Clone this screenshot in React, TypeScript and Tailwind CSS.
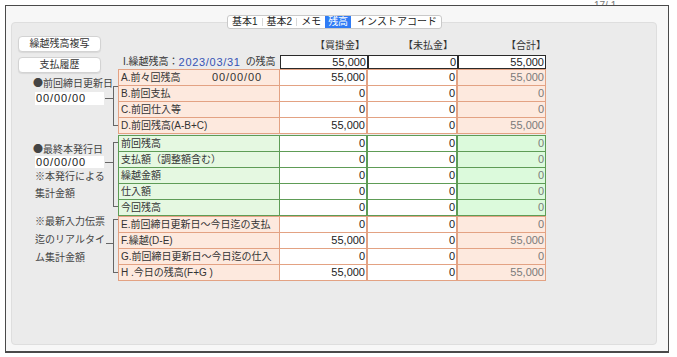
import React from "react";

const font = "font-['Liberation_Sans','Noto_Sans_CJK_JP',sans-serif]";

type Tone = "orange" | "green";

const tones = {
  orange: {
    border: "border-[#e3a283]",
    label: "bg-[#fde9de]",
    total: "bg-[#fde9de]",
  },
  green: {
    border: "border-[#5e9c56]",
    label: "bg-[#e5f8e1]",
    total: "bg-[#dcfadc]",
  },
};

type RowProps = {
  label: React.ReactNode;
  v1: string;
  v2: string;
  v3: string;
  tone: Tone;
};

function Row({ label, v1, v2, v3, tone }: RowProps) {
  const t = tones[tone];
  return (
    <div className={`grid h-[16px] grid-cols-[161px_88px_90px_87px] border-b ${t.border}`}>
      <div className={`flex items-center whitespace-nowrap border-r pl-[2px] text-[10px] leading-none text-[#333] ${t.border} ${t.label}`}>
        {label}
      </div>
      <div className={`flex items-center justify-end border-r-2 bg-white pr-[1px] text-[11px] leading-none text-[#222] ${t.border}`}>
        {v1}
      </div>
      <div className={`flex items-center justify-end border-r-2 bg-white pr-[1px] text-[11px] leading-none text-[#222] ${t.border}`}>
        {v2}
      </div>
      <div className={`flex items-center justify-end pr-[1px] text-[11px] leading-none text-[#7a7a7a] ${t.total}`}>
        {v3}
      </div>
    </div>
  );
}

function Block({ tone, rows }: { tone: Tone; rows: Omit<RowProps, "tone">[] }) {
  return (
    <div className={`border-x border-t ${tones[tone].border}`}>
      {rows.map((r, i) => (
        <Row key={i} tone={tone} {...r} />
      ))}
    </div>
  );
}

// full-width bullet, Liberation's own glyph is too small
const Dot = () => <span className="font-['Noto_Sans_CJK_JP',sans-serif]">●</span>;

export default function App() {
  return (
    <div className={`relative h-[357px] w-[677px] overflow-hidden bg-white pl-[5px] pt-[5px] ${font}`}>
      <span className="absolute left-[594px] top-[1px] text-[10px] leading-none text-[#777]">17/ 1</span>

      <div className="relative h-[348px] w-[664px] border border-b-2 border-[#4a4a4a] bg-[#f7f7f7] pl-[5px] pt-[16px]">
        {/* tabs */}
        <div className="absolute left-[221px] top-[9px] z-10 flex h-[14px] items-stretch rounded-[3px] border border-[#c9c9c9] bg-white text-[10px] leading-none text-[#222]">
          <span className="flex items-center px-[4px]">基本1</span>
          <span className="my-[2px] w-px bg-[#d8d8d8]" />
          <span className="flex items-center px-[4px]">基本2</span>
          <span className="my-[2px] w-px bg-[#d8d8d8]" />
          <span className="flex items-center px-[4px]">メモ</span>
          <span className="flex items-center bg-[#2f7bf5] px-[3px] text-white">残高</span>
          <span className="flex items-center pl-[6px] pr-[4px]">インストアコード</span>
        </div>

        <div className="flex h-[323px] w-[646px] rounded-[4px] border border-[#dedede] bg-[#ebebeb]">
          {/* left side */}
          <div className="flex w-[106px] shrink-0 flex-col pt-[13px] text-[10px] text-[#444]">
            <button className="ml-[6px] h-[16px] w-[83px] rounded-[4px] border border-[#d3d3d3] bg-white text-[10px] leading-none text-[#333] shadow-[0_1px_1px_rgba(0,0,0,0.08)]">
              繰越残高複写
            </button>
            <button className="ml-[6px] mt-[5px] h-[16px] w-[83px] rounded-[4px] border border-[#d3d3d3] bg-white text-[10px] leading-none text-[#333] shadow-[0_1px_1px_rgba(0,0,0,0.08)]">
              支払履歴
            </button>

            <div className="ml-[21px] mt-[4px] flex">
              <div className="w-[80px]">
                <div className="h-[12px] whitespace-nowrap leading-[12px]">
                  <Dot />前回締日更新日
                </div>
                <div className="mt-[3px] flex items-center">
                  <div className="ml-[2px] flex h-[13px] w-[69px] items-center bg-white pl-[1px] text-[11px] leading-none tracking-[0.9px] text-[#222]">
                    00/00/00
                  </div>
                  <div className="ml-[1px] h-px flex-1 bg-[#666]" />
                </div>
              </div>
              <div className="mt-[9px] h-[40px] w-[5px] border-y border-l border-[#666]" />
            </div>

            <div className="ml-[21px] mt-[15px] flex">
              <div className="w-[80px]">
                <div className="mt-[2px] h-[12px] whitespace-nowrap leading-[12px]">
                  <Dot />最終本発行日
                </div>
                <div className="mt-[1px] flex items-center">
                  <div className="ml-[2px] flex h-[12px] w-[69px] items-center bg-white pl-[1px] text-[11px] leading-none tracking-[0.9px] text-[#222]">
                    00/00/00
                  </div>
                  <div className="ml-[1px] h-px flex-1 bg-[#666]" />
                </div>
                <div className="whitespace-nowrap pl-[2px] leading-[17px]">
                  <div>※本発行による</div>
                  <div>集計金額</div>
                </div>
              </div>
              <div className="mt-[1px] h-[65px] w-[5px] border-y border-l border-[#666]" />
            </div>

            <div className="ml-[21px] mt-[6px] flex">
              <div className="w-[80px] whitespace-nowrap pl-[2px] leading-[18px]">
                <div>※最新入力伝票</div>
                <div className="flex items-center">
                  <span>迄のリアルタイ</span>
                  <span className="ml-[1px] mt-[6px] h-px flex-1 bg-[#666]" />
                </div>
                <div>ム集計金額</div>
              </div>
              <div className="mt-[6px] h-[54px] w-[5px] border-y border-l border-[#666]" />
            </div>
          </div>

          {/* table */}
          <div className="flex flex-col pt-[16px]">
            <div className="grid h-[14px] grid-cols-[162px_88px_90px_88px] text-[10px] leading-[14px] text-[#333]">
              <div />
              <div className="pr-[3px] text-right">【買掛金】</div>
              <div className="pr-[5px] text-right">【未払金】</div>
              <div className="text-right">【合計】</div>
            </div>

            <div className="mt-[2px] grid h-[14px] grid-cols-[162px_88px_90px_88px]">
              <div className="flex items-center whitespace-nowrap pl-[5px] text-[10px] leading-none text-[#333]">
                <span>I.繰越残高：</span>
                <span className="text-[11px] tracking-[0.7px] text-[#3553b5]">2023/03/31</span>
                <span className="ml-[5px]">の残高</span>
              </div>
              <div className="flex items-center justify-end border border-[#2a2a2a] bg-white pr-[1px] text-[11px] leading-none text-[#222]">
                55,000
              </div>
              <div className="flex items-center justify-end border border-[#2a2a2a] bg-white pr-[1px] text-[11px] leading-none text-[#222]">
                0
              </div>
              <div className="flex items-center justify-end border border-[#2a2a2a] bg-white pr-[1px] text-[11px] leading-none text-[#222]">
                55,000
              </div>
            </div>

            <Block
              tone="orange"
              rows={[
                {
                  label: (
                    <>
                      <span className="w-[91px]">A.前々回残高</span>
                      <span className="text-[11px] tracking-[0.9px]">00/00/00</span>
                    </>
                  ),
                  v1: "55,000",
                  v2: "0",
                  v3: "55,000",
                },
                { label: "B.前回支払", v1: "0", v2: "0", v3: "0" },
                { label: "C.前回仕入等", v1: "0", v2: "0", v3: "0" },
                { label: "D.前回残高(A-B+C)", v1: "55,000", v2: "0", v3: "55,000" },
              ]}
            />

            <div className="mt-[1px]">
              <Block
                tone="green"
                rows={[
                  { label: "前回残高", v1: "0", v2: "0", v3: "0" },
                  { label: "支払額（調整額含む）", v1: "0", v2: "0", v3: "0" },
                  { label: "繰越金額", v1: "0", v2: "0", v3: "0" },
                  { label: "仕入額", v1: "0", v2: "0", v3: "0" },
                  { label: "今回残高", v1: "0", v2: "0", v3: "0" },
                ]}
              />
            </div>

            <Block
              tone="orange"
              rows={[
                { label: "E.前回締日更新日～今日迄の支払", v1: "0", v2: "0", v3: "0" },
                { label: "F.繰越(D-E)", v1: "55,000", v2: "0", v3: "55,000" },
                { label: "G.前回締日更新日～今日迄の仕入", v1: "0", v2: "0", v3: "0" },
                { label: "H .今日の残高(F+G )", v1: "55,000", v2: "0", v3: "55,000" },
              ]}
            />
          </div>
        </div>
      </div>
    </div>
  );
}
